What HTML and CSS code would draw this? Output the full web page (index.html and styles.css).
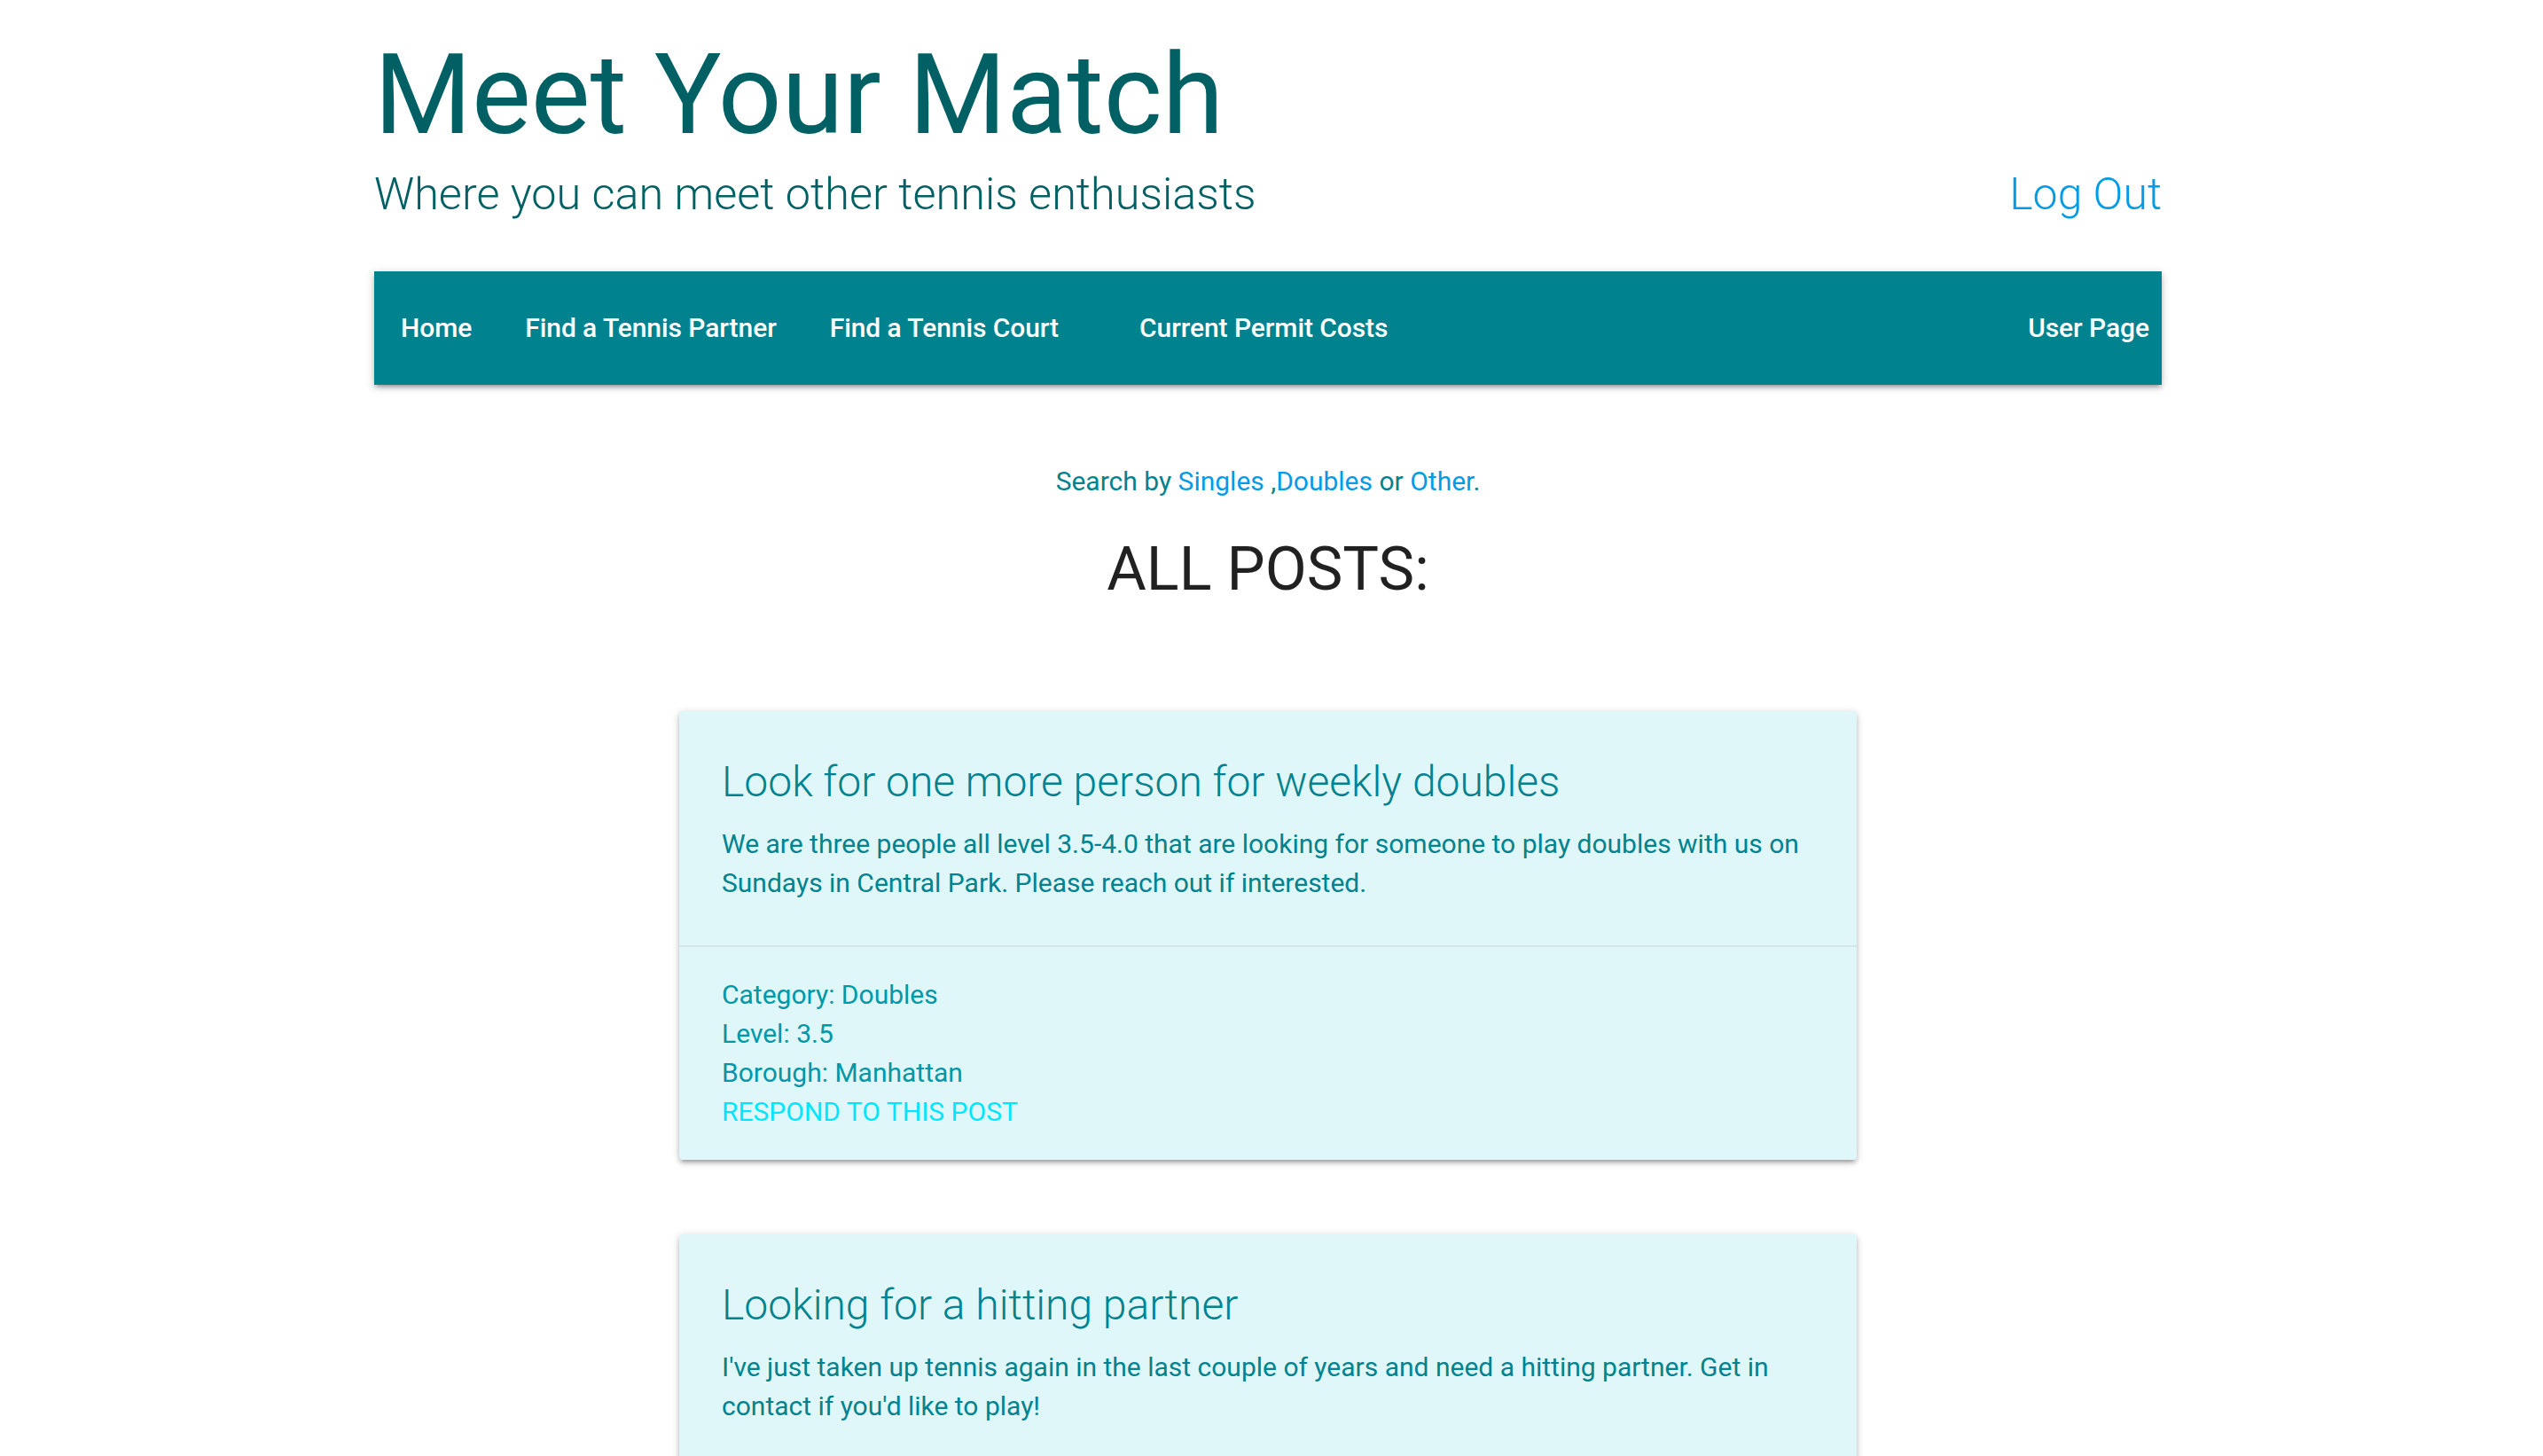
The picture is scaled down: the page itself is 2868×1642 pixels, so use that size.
FILE: index.html
```html
<!DOCTYPE html>
<html lang="en">
<head>
<meta charset="utf-8">
<title>Meet Your Match</title>
<link rel="stylesheet" href="styles.css">
</head>
<body>
<div class="container">
  <header class="site-header">
    <h1 class="site-title">Meet Your Match</h1>
    <div class="subrow">
      <h5 class="tagline">Where you can meet other tennis enthusiasts</h5>
      <a class="logout" href="#">Log Out</a>
    </div>
  </header>

  <nav class="navbar">
    <ul class="nav-left">
      <li><a href="#">Home</a></li>
      <li><a href="#">Find a Tennis Partner</a></li>
      <li><a href="#">Find a Tennis Court</a></li>
      <li class="spacer"></li>
      <li><a href="#">Current Permit Costs</a></li>
    </ul>
    <ul class="nav-right">
      <li><a href="#">User Page</a></li>
    </ul>
  </nav>

  <p class="search">Search by <a href="#">Singles</a> ,<a href="#">Doubles</a> or <a href="#">Other</a>.</p>
  <h4 class="heading">ALL POSTS:</h4>

  <div class="posts">
    <div class="card">
      <div class="card-content">
        <span class="card-title">Look for one more person for weekly doubles</span>
        <p>We are three people all level 3.5-4.0 that are looking for someone to play doubles with us on Sundays in Central Park. Please reach out if interested.</p>
      </div>
      <div class="card-action">
        <div>Category: Doubles</div>
        <div>Level: 3.5</div>
        <div>Borough: Manhattan</div>
        <a href="#">Respond to this post</a>
      </div>
    </div>

    <div class="card">
      <div class="card-content">
        <span class="card-title">Looking for a hitting partner</span>
        <p>I've just taken up tennis again in the last couple of years and need a hitting partner. Get in contact if you'd like to play!</p>
      </div>
      <div class="card-action">
        <div>Category: Singles</div>
        <div>Level: 3.0</div>
        <div>Borough: Brooklyn</div>
        <a href="#">Respond to this post</a>
      </div>
    </div>
  </div>
</div>
</body>
</html>
```
FILE: styles.css
```css
* { box-sizing: border-box; }

html, body {
  margin: 0;
  padding: 0;
  background: #ffffff;
}

body {
  font-family: Roboto, "Liberation Sans", Arial, sans-serif;
  font-size: 30px;
  line-height: 45px;
  color: rgba(0, 0, 0, 0.87);
}

a { text-decoration: none; }

.container {
  width: 2016px;
  margin-left: calc(50% - 1012px);
}

.site-title {
  margin: 38px 0 12px;
  font-size: 126px;
  line-height: 138.6px;
  font-weight: 400;
  color: #006064;
}

.subrow {
  display: flex;
  justify-content: space-between;
  align-items: baseline;
  height: 60px;
  margin-bottom: 57px;
}

.tagline {
  margin: 0;
  font-size: 50.4px;
  line-height: 60px;
  font-weight: 300;
  color: #006064;
}

.logout {
  font-size: 50px;
  line-height: 60px;
  font-weight: 300;
  color: #039be5;
}

.navbar {
  display: flex;
  justify-content: space-between;
  height: 128px;
  background: #00838f;
  box-shadow: 0 4px 4px 0 rgba(0,0,0,0.14), 0 6px 2px -4px rgba(0,0,0,0.12), 0 2px 10px 0 rgba(0,0,0,0.2);
}

.navbar ul {
  display: flex;
  margin: 0;
  padding: 0;
  list-style: none;
}

.navbar a {
  display: block;
  padding: 0 30px;
  line-height: 128px;
  font-size: 30px;
  font-weight: 500;
  letter-spacing: -0.07px;
  color: #ffffff;
}

.navbar .spacer { width: 31px; }

.nav-right a { padding-right: 14px; }

.search {
  margin: 86px 0 40px;
  text-align: center;
  font-size: 30px;
  line-height: 45px;
  color: #00838f;
}

.search a { color: #039be5; }

.heading {
  margin: 0 0 122px;
  text-align: center;
  font-size: 68.4px;
  line-height: 75.24px;
  font-weight: 400;
  color: rgba(0, 0, 0, 0.87);
}

.posts {
  display: flex;
  flex-direction: column;
  align-items: center;
  gap: 84px;
}

.card {
  width: 1328px;
  background: #e0f7fa;
  border-radius: 4px;
  box-shadow: 0 4px 4px 0 rgba(0,0,0,0.14), 0 6px 2px -4px rgba(0,0,0,0.12), 0 2px 10px 0 rgba(0,0,0,0.2);
}

.card-content {
  padding: 48px;
  color: #00838f;
}

.card-title {
  display: block;
  margin-bottom: 16px;
  font-size: 48px;
  line-height: 64px;
  font-weight: 300;
  color: #00838f;
}

.card-content p {
  margin: 0;
  font-size: 30px;
  line-height: 44px;
}

.card-action {
  border-top: 2px solid rgba(160, 160, 160, 0.2);
  padding: 32px 48px;
  font-size: 30px;
  line-height: 44px;
  color: #0097a7;
}

.card-action a {
  display: block;
  color: #00e5ff;
  text-transform: uppercase;
}
```
